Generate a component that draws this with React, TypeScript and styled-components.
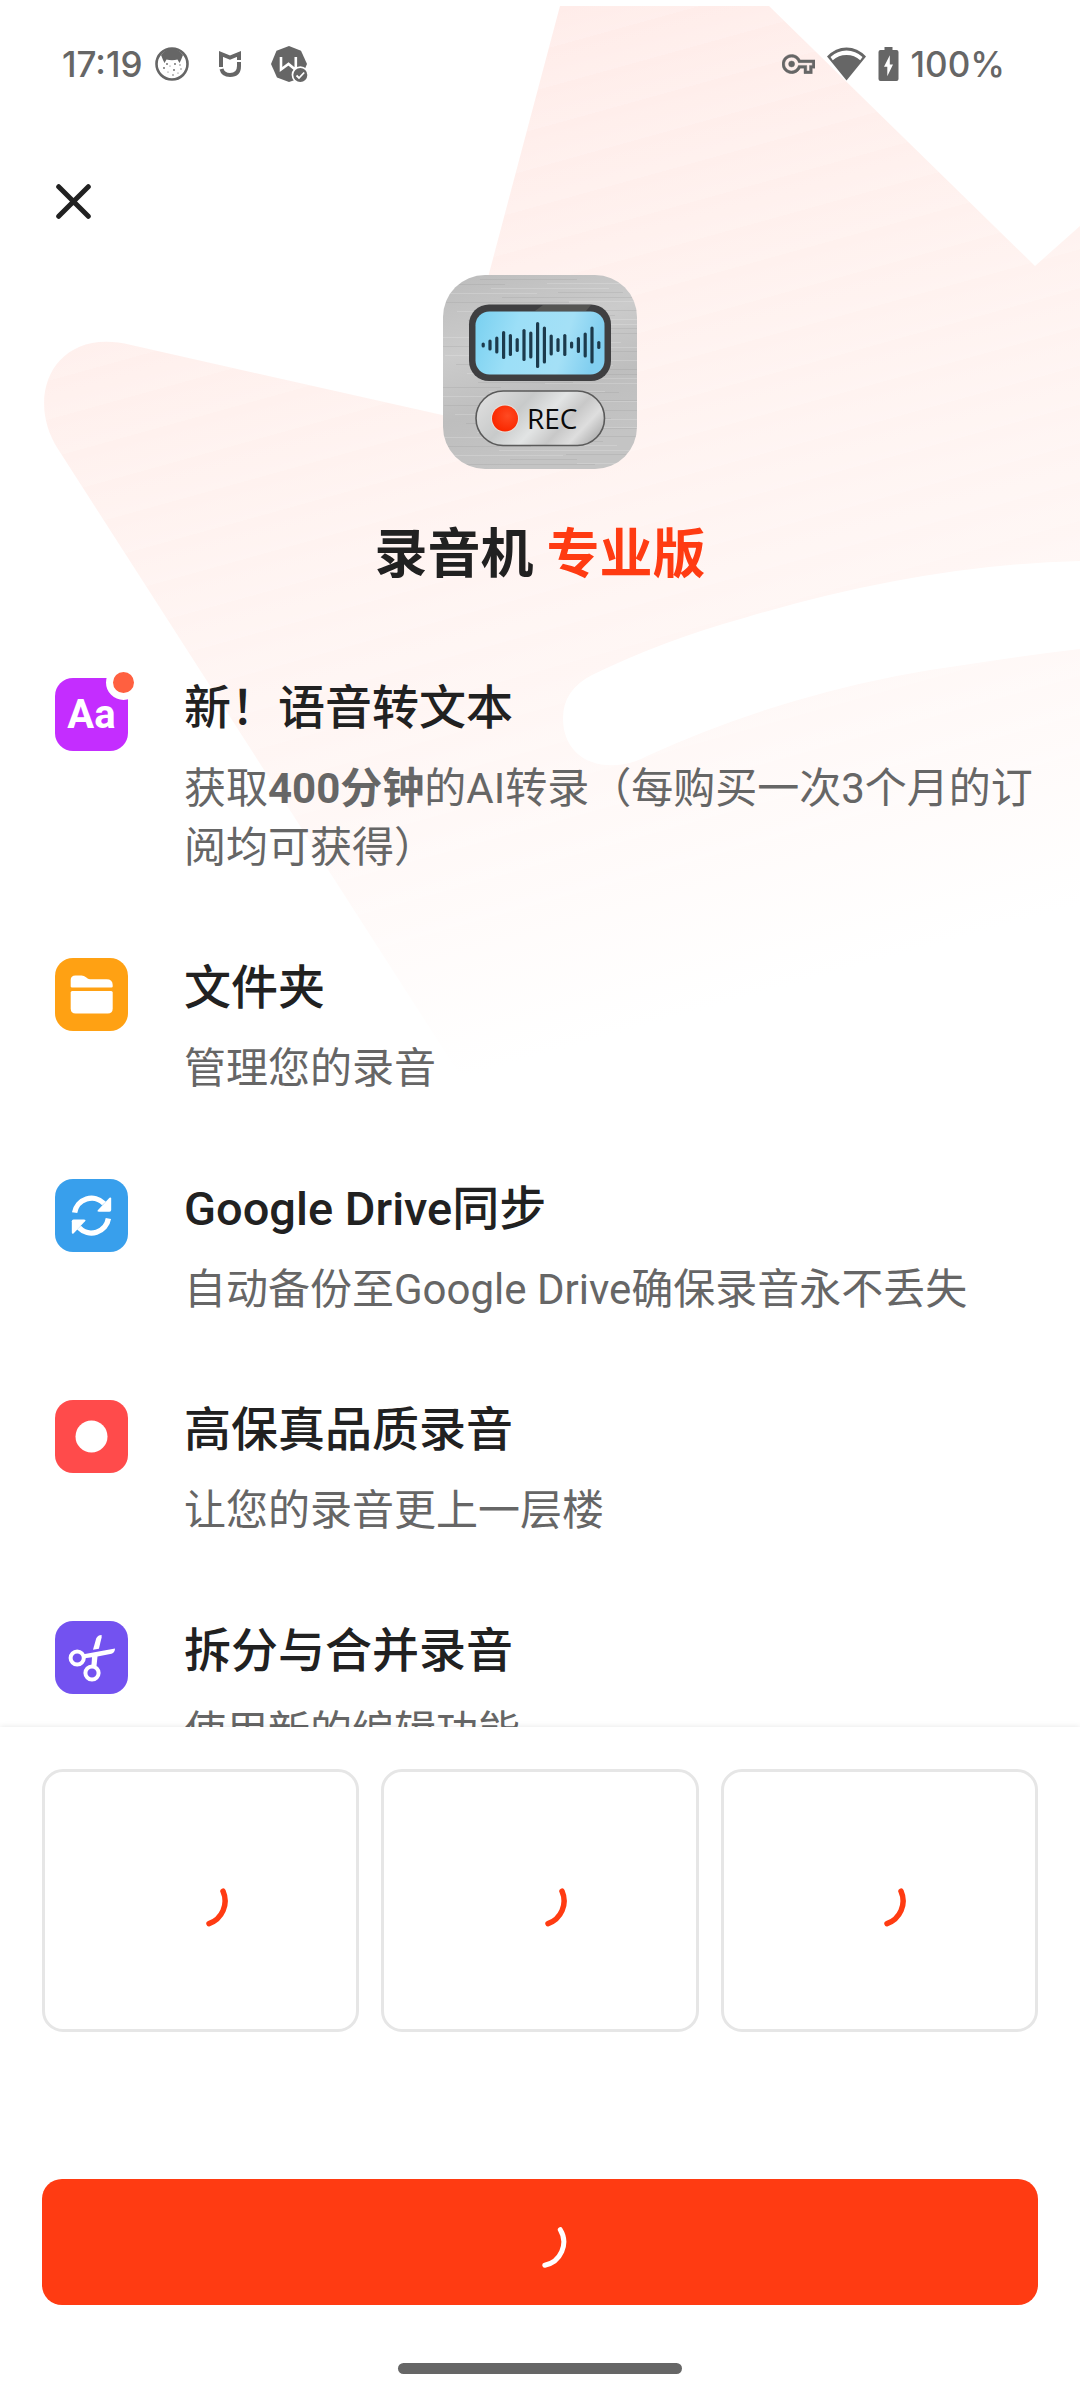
import React from "react";
import styled, { createGlobalStyle } from "styled-components";

const Global = createGlobalStyle`
  * { box-sizing: border-box; }
  body {
    margin: 0;
    background: #fff;
    color: #212121;
    font-family: Roboto, "Noto Sans CJK SC", sans-serif;
  }
  h1, h2, p, ul { margin: 0; padding: 0; }
`;

const Page = styled.div`
  position: relative;
  display: flex;
  flex-direction: column;
  height: 100vh;
  background: #fff;
`;

const Backdrop = styled.svg`
  position: absolute;
  top: 0;
  left: 0;
  width: 100%;
`;

const StatusBar = styled.header`
  position: relative;
  flex: none;
  display: flex;
  align-items: center;
  justify-content: space-between;
  height: 128px;
  padding: 0 75px 0 62px;
  color: #666;
  font: 500 35px/40px Inter, sans-serif;
`;

const StatusGroup = styled.div<{ $gap: number }>`
  display: flex;
  align-items: center;
  gap: ${(p) => p.$gap}px;
`;

const Scroll = styled.main`
  position: relative;
  flex: 1;
  min-height: 0;
  overflow: auto;
  scrollbar-width: none;
`;

const TopBar = styled.div`
  display: flex;
  align-items: center;
  height: 147px;
  padding: 0 40px;
`;

const CloseButton = styled.button`
  display: flex;
  padding: 16px;
  border: 0;
  background: none;
  color: #212121;
`;

const Hero = styled.div`
  display: flex;
  flex-direction: column;
  align-items: center;
  gap: 51px;
`;

const AppTitle = styled.h1`
  font-size: 53px;
  line-height: 70px;
  font-weight: 700;
`;

const Accent = styled.span`
  color: #ff3b12;
`;

const FeatureList = styled.ul`
  display: flex;
  flex-direction: column;
  gap: 79px;
  padding: 86px 42px 80px 55px;
  list-style: none;
`;

const FeatureItem = styled.li`
  display: flex;
  align-items: flex-start;
  gap: 56px;
`;

const Tile = styled.div<{ $color: string }>`
  position: relative;
  flex: none;
  display: flex;
  align-items: center;
  justify-content: center;
  width: 73px;
  height: 73px;
  margin-top: 2px;
  border-radius: 18px;
  background: ${(p) => p.$color};
  color: #fff;
  font-size: 40px;
  line-height: 48px;
  font-weight: 700;
`;

const NewDot = styled.span`
  position: absolute;
  top: -13px;
  right: -13px;
  width: 35px;
  height: 35px;
  border: 7px solid #fff;
  border-radius: 50%;
  background: #ff6040;
`;

const FeatureText = styled.div`
  display: flex;
  flex-direction: column;
  gap: 21px;
  min-width: 0;
  padding-top: 2px;
`;

const FeatureTitle = styled.h2`
  font-size: 47px;
  line-height: 60px;
  font-weight: 500;
`;

const FeatureDesc = styled.p`
  color: #666;
  font-size: 42px;
  line-height: 59px;
`;

const Sheet = styled.footer`
  position: relative;
  flex: none;
  display: flex;
  flex-direction: column;
  align-items: center;
  padding: 42px 42px 26px;
  background: #fff;
  box-shadow: 0 0 6px rgba(0, 0, 0, 0.1);
`;

const Plans = styled.div`
  display: grid;
  grid-template-columns: repeat(3, 1fr);
  gap: 22px;
  width: 100%;
`;

const PlanCard = styled.button`
  display: flex;
  align-items: center;
  justify-content: center;
  height: 263px;
  border: 3px solid #e6e6e6;
  border-radius: 21px;
  background: #fff;
  color: #ff3b12;
`;

const SubscribeButton = styled.button`
  display: flex;
  align-items: center;
  justify-content: center;
  width: 100%;
  height: 126px;
  margin: 147px 0 58px;
  border: 0;
  border-radius: 20px;
  background: #ff3b12;
  color: #fff;
`;

const HomeHandle = styled.div`
  width: 284px;
  height: 11px;
  border-radius: 6px;
  background: #666;
`;

const crownPath = "M560 6H769L1035 266L1080 226V1100H476L58 449C24 396 54 326 131 345L451 417Z";

const Crown = () => (
  <Backdrop viewBox="0 0 1080 1100" aria-hidden="true">
    <defs>
      <linearGradient id="crown" gradientUnits="userSpaceOnUse" x1="560" y1="6" x2="830" y2="975">
        <stop offset="0" stopColor="#ffece9" />
        <stop offset="0.3" stopColor="#fff1ee" />
        <stop offset="0.65" stopColor="#fff6f4" />
        <stop offset="0.85" stopColor="#fffbfa" />
        <stop offset="1" stopColor="#ffffff" />
      </linearGradient>
      <linearGradient id="stripes" gradientUnits="userSpaceOnUse" spreadMethod="repeat" x1="560" y1="6" x2="570" y2="42">
        <stop offset="0" stopColor="#fff" stopOpacity="0" />
        <stop offset="1" stopColor="#fff" stopOpacity="0.14" />
      </linearGradient>
    </defs>
    <path fill="url(#crown)" d={crownPath} />
    <path fill="url(#stripes)" d={crownPath} />
    <path
      fill="#fff"
      d="M592 675Q664 640 744 618Q820 595 895 581Q990 563 1080 561V649Q1020 656 964 665Q895 674 827 692Q735 716 647 756C610 776 563 764 563 718Q563 690 592 675Z"
    />
  </Backdrop>
);

const CatIcon = () => (
  <svg width="34" height="34" viewBox="0 0 34 34" fill="#666">
    <circle cx="17" cy="17" r="15.5" fill="#fff" stroke="#666" strokeWidth="2.6" />
    <path d="M6 8Q11 1.500 17 1.500T28 8L26 13L24.500 16L22.500 12.500Q17 14 11.500 12.500L9.500 16L8 13Z" />
    <g>
      <circle cx="12" cy="17" r="0.9" />
      <circle cx="20" cy="17" r="0.9" />
      <circle cx="25" cy="18" r="0.7" />
      <circle cx="9" cy="21" r="0.9" />
      <circle cx="15" cy="19" r="0.6" />
      <circle cx="19" cy="23" r="0.9" />
      <circle cx="26" cy="22" r="0.7" />
      <circle cx="13" cy="25" r="0.6" />
      <circle cx="18" cy="28" r="0.8" />
      <circle cx="23" cy="26" r="0.6" />
    </g>
  </svg>
);

const MiIcon = () => (
  <svg width="22" height="26" viewBox="0 0 22 26" fill="none" stroke="#666" strokeWidth="4">
    <path d="M2 16V3L11 6.500L20 3V9" />
    <path d="M2.500 18Q4 24 11 24Q20 24 20 15V11" />
  </svg>
);

const BadgeIcon = () => (
  <svg width="37" height="37" viewBox="0 0 37 37">
    <path fill="#666" d="M18 0L30 4.700L36 18L30 32L18 36L6 31.500L0 18L5.500 4.700Z" />
    <path fill="none" stroke="#fff" strokeWidth="2.600" d="M10 11V23.500L17.500 18L24.800 24V11" />
    <circle cx="29.300" cy="29" r="8.700" fill="#fff" />
    <circle cx="29.300" cy="29" r="7" fill="#666" />
    <path fill="none" stroke="#fff" strokeWidth="1.800" d="M25.500 29.500L28 32L33.200 26.500" />
  </svg>
);

const KeyIcon = () => (
  <svg width="33" height="20" viewBox="0 5 24 14" fill="#666" stroke="#666" strokeWidth="0.3">
    <path d="M22 19h-6v-4h-2.680c-1.140 2.420-3.600 4-6.320 4-3.860 0-7-3.140-7-7s3.140-7 7-7c2.720 0 5.170 1.580 6.320 4H24v6h-2v4zm-4-2h2v-4h2v-2H11.940l-.23-.67C11.010 8.340 9.110 7 7 7c-2.760 0-5 2.240-5 5s2.240 5 5 5c2.110 0 4.010-1.340 4.710-3.330l.23-.67H18v4zM7 14.200a2.200 2.200 0 1 1 0-4.400a2.200 2.200 0 1 1 0 4.400z" />
  </svg>
);

const WifiIcon = () => (
  <svg width="39" height="34" viewBox="0 0 39 34">
    <path fill="#666" d="M19.500 33.500L0 9.500Q8.500 0.500 19.500 0.500T39 9.500Z" />
    <path fill="#fff" d="M3.500 10Q10.500 3.500 19.500 3.500T35.500 10L33.200 13.200Q27.500 8 19.500 8T5.800 13.200Z" />
  </svg>
);

const BatteryIcon = () => (
  <svg width="21" height="34" viewBox="0 0 21 34">
    <path fill="#666" d="M6.500 0H14.500V3H18.500Q20.500 3 20.500 5V32Q20.500 34 18.500 34H2.500Q0.500 34 0.500 32V5Q0.500 3 2.500 3H6.500Z" />
    <path fill="#fff" d="M11.800 8.300L6 19.800H9.300V29.300L15 17.400H11.800Z" />
  </svg>
);

const bars = [5, 11, 17, 28, 22, 14, 32, 27, 46, 37, 21, 14, 22, 7, 16, 25, 37, 8];
const scratches = Array.from({ length: 64 }, (_, i) => ({
  x: ((i * 67) % 190) - 30,
  y: i * 3 + ((i * 7) % 3),
  w: 60 + ((i * 37) % 90),
  light: i % 2 === 0,
}));

const AppIcon = () => (
  <svg width="194" height="194" viewBox="0 0 194 194" role="img" aria-label="录音机">
    <defs>
      <linearGradient id="metal" x1="0" y1="0" x2="0.3" y2="1">
        <stop offset="0" stopColor="#bcbcbc" />
        <stop offset="0.4" stopColor="#cbcbcb" />
        <stop offset="0.7" stopColor="#bebebe" />
        <stop offset="1" stopColor="#c4c4c4" />
      </linearGradient>
      <linearGradient id="lcd" x1="0" y1="0" x2="1" y2="0.15">
        <stop offset="0" stopColor="#79d0f0" />
        <stop offset="0.35" stopColor="#9cdff7" />
        <stop offset="0.75" stopColor="#a4e0f6" />
        <stop offset="1" stopColor="#82cff0" />
      </linearGradient>
      <linearGradient id="pill" x1="0" y1="0.3" x2="1" y2="0.7">
        <stop offset="0" stopColor="#dcdcdc" />
        <stop offset="0.3" stopColor="#c8caca" />
        <stop offset="0.52" stopColor="#e2e4e4" />
        <stop offset="0.7" stopColor="#c8c8c8" />
        <stop offset="0.85" stopColor="#dedede" />
        <stop offset="1" stopColor="#b4b4b4" />
      </linearGradient>
      <radialGradient id="rec" cx="0.6" cy="0.4" r="0.6">
        <stop offset="0" stopColor="#ff4a22" />
        <stop offset="1" stopColor="#fa2800" />
      </radialGradient>
      <clipPath id="body">
        <rect width="194" height="194" rx="42" />
      </clipPath>
    </defs>
    <g clipPath="url(#body)">
      <rect width="194" height="194" fill="url(#metal)" />
      {scratches.map((s) => (
        <rect key={s.y} x={s.x} y={s.y} width={s.w} height="1" fill={s.light ? "#fff" : "#888"} opacity="0.18" />
      ))}
    </g>
    <rect x="26" y="29.500" width="142" height="76.500" rx="20" fill="#3f3f41" />
    <path d="M100 30H148L143 36H92Z" fill="#555553" />
    <rect x="32.500" y="36.500" width="129" height="63" rx="14" fill="url(#lcd)" />
    {bars.map((h, i) => (
      <rect key={i} x={38.600 + i * 6.800} y={70 - h / 2} width="3.200" height={h} rx="1.600" fill="#1c3a4c" />
    ))}
    <rect x="33" y="116" width="128.500" height="54.500" rx="27.200" fill="url(#pill)" stroke="#5a5a5a" strokeWidth="1.600" />
    <circle cx="62" cy="143.500" r="14" fill="#e4e0dc" />
    <circle cx="62" cy="143.500" r="13" fill="url(#rec)" />
    <text x="84" y="154" fontFamily="'Open Sans', sans-serif" fontSize="28" fontWeight="500" fill="#0a0a0a">
      REC
    </text>
  </svg>
);

const FolderIcon = () => (
  <svg width="73" height="73" viewBox="0 0 73 73" fill="#fff">
    <path d="M15.700 28.500V22Q15.700 17.500 20.500 17.500H26.500Q29 17.500 31 19.300Q33 21.200 35 21.200H51.500Q57.700 21.200 57.700 27V28.500Q57.700 29.600 56.500 29.600H17Q15.700 29.600 15.700 28.500Z" />
    <path d="M17.200 33H56.200Q57.700 33 57.700 34.500V50.500Q57.700 55.500 52.700 55.500H20.700Q15.700 55.500 15.700 50.500V34.500Q15.700 33 17.200 33Z" />
  </svg>
);

const SyncHalf = () => (
  <>
    <path d="M19.600 33.700A17.200 17.200 0 0 1 49 24.500" fill="none" stroke="#fff" strokeWidth="5.400" />
    <path d="M54.500 18.800Q56.200 17.800 56.200 19.600V31Q56.200 32.700 54.500 32.700H44Q41.500 32.700 43 31Z" fill="#fff" />
  </>
);

const SyncIcon = () => (
  <svg width="73" height="73" viewBox="0 0 73 73">
    <SyncHalf />
    <g transform="rotate(180 36.500 36.600)">
      <SyncHalf />
    </g>
  </svg>
);

const RecordIcon = () => (
  <svg width="73" height="73" viewBox="0 0 73 73" fill="#fff">
    <circle cx="36.500" cy="36.500" r="16" />
  </svg>
);

const ScissorsIcon = () => (
  <svg width="73" height="73" viewBox="0 0 73 73" fill="#fff">
    <circle cx="22.200" cy="37" r="6.600" fill="none" stroke="#fff" strokeWidth="4" />
    <circle cx="37" cy="52" r="6.600" fill="none" stroke="#fff" strokeWidth="4" />
    <path d="M28.500 33.300L60 27.500Q60 31.500 56.500 32.800L42.500 35.400L41.500 45H36.400L37 36.300L29.500 37.200Z" />
    <path d="M38 28.700L41.200 17.500Q42.300 14.300 46.600 13.900V16.500L43.900 27.800Z" />
  </svg>
);

const CardSpinner = () => (
  <svg width="56" height="56" viewBox="-28 -28 56 56" fill="none" stroke="currentColor" strokeWidth="5.500" strokeLinecap="round">
    <path d="M22 -9.800A24 24 0 0 1 8 22.600" />
  </svg>
);

const ButtonSpinner = () => (
  <svg width="56" height="56" viewBox="-28 -28 56 56" fill="none" stroke="currentColor" strokeWidth="5" strokeLinecap="round">
    <path d="M20.300 -12.300A23.700 23.700 0 0 1 4.800 23.200" />
  </svg>
);

type Feature = {
  color: string;
  icon: React.ReactNode;
  title: string;
  desc: React.ReactNode;
};

const features: Feature[] = [
  {
    color: "#c42dff",
    icon: (
      <>
        Aa
        <NewDot />
      </>
    ),
    title: "新！语音转文本",
    desc: (
      <>
        获取<b>400分钟</b>的AI转录（每购买一次3个月的订阅均可获得）
      </>
    ),
  },
  { color: "#ffa113", icon: <FolderIcon />, title: "文件夹", desc: "管理您的录音" },
  { color: "#389fec", icon: <SyncIcon />, title: "Google Drive同步", desc: "自动备份至Google Drive确保录音永不丢失" },
  { color: "#ff4b4b", icon: <RecordIcon />, title: "高保真品质录音", desc: "让您的录音更上一层楼" },
  { color: "#7352f0", icon: <ScissorsIcon />, title: "拆分与合并录音", desc: "使用新的编辑功能" },
];

const plans = ["方案一", "方案二", "方案三"];

export default function App() {
  return (
    <Page lang="zh-CN">
      <Global />
      <Crown />
      <StatusBar>
        <StatusGroup $gap={30}>
          <StatusGroup $gap={12}>
            <span>17:19</span>
            <CatIcon />
          </StatusGroup>
          <MiIcon />
          <BadgeIcon />
        </StatusGroup>
        <StatusGroup $gap={12}>
          <KeyIcon />
          <WifiIcon />
          <BatteryIcon />
          <span>100%</span>
        </StatusGroup>
      </StatusBar>
      <Scroll>
        <TopBar>
          <CloseButton type="button" aria-label="关闭">
            <svg width="35" height="35" viewBox="0 0 35 35" stroke="currentColor" strokeWidth="5" strokeLinecap="round">
              <path d="M2.700 2.700L32.300 32.300M32.300 2.700L2.700 32.300" />
            </svg>
          </CloseButton>
        </TopBar>
        <Hero>
          <AppIcon />
          <AppTitle>
            录音机 <Accent>专业版</Accent>
          </AppTitle>
        </Hero>
        <FeatureList>
          {features.map((f) => (
            <FeatureItem key={f.title}>
              <Tile $color={f.color}>{f.icon}</Tile>
              <FeatureText>
                <FeatureTitle>{f.title}</FeatureTitle>
                <FeatureDesc>{f.desc}</FeatureDesc>
              </FeatureText>
            </FeatureItem>
          ))}
        </FeatureList>
      </Scroll>
      <Sheet>
        <Plans>
          {plans.map((name) => (
            <PlanCard key={name} type="button" aria-label={name}>
              <CardSpinner />
            </PlanCard>
          ))}
        </Plans>
        <SubscribeButton type="button" aria-label="订阅">
          <ButtonSpinner />
        </SubscribeButton>
        <HomeHandle />
      </Sheet>
    </Page>
  );
}
